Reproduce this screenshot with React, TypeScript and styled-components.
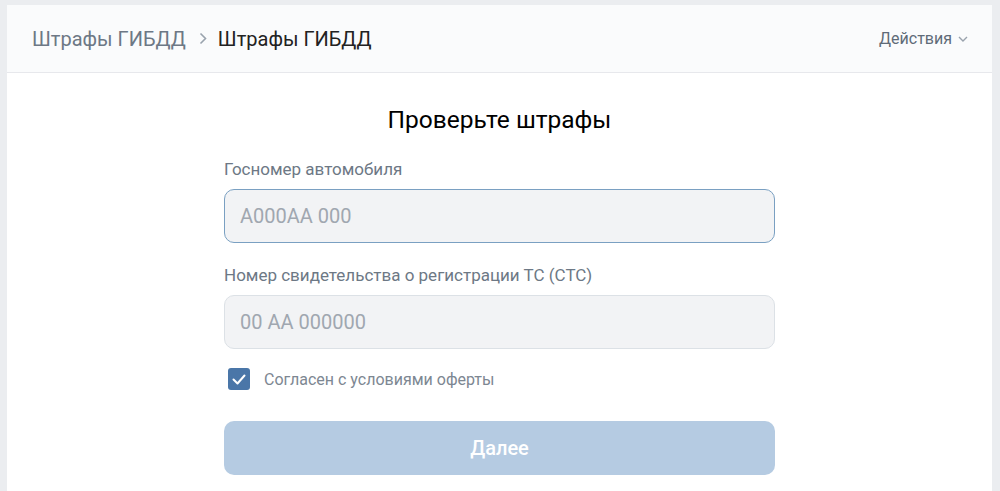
import styled, { createGlobalStyle } from "styled-components";

const GlobalStyle = createGlobalStyle`
  html, body {
    margin: 0;
    padding: 0;
    background: #ebedf0;
    font-family: Roboto, "Liberation Sans", Arial, sans-serif;
  }
`;

const Page = styled.div`
  padding: 5px 8px 0 7px;
  height: 491px;
  box-sizing: border-box;
  overflow: hidden;
`;

const Card = styled.div`
  background: #ffffff;
  height: 100%;
  display: flex;
  flex-direction: column;
`;

const Header = styled.div`
  height: 68px;
  box-sizing: border-box;
  background: #fafbfc;
  border-bottom: 1px solid #e7e8ec;
  display: flex;
  align-items: center;
  justify-content: space-between;
  padding: 0 24px 0 25px;
`;

const Crumbs = styled.div`
  display: flex;
  align-items: center;
  font-size: 20px;
`;

const Crumb = styled.span<{ $active?: boolean }>`
  color: ${(p) => (p.$active ? "#222222" : "#6d7885")};
`;

const Sep = styled.span`
  display: inline-flex;
  margin: 0 11px 0 13px;
  color: #99a2ad;
`;

const Actions = styled.button`
  border: none;
  background: none;
  padding: 0;
  font: inherit;
  font-size: 16px;
  color: #5f6b78;
  display: flex;
  align-items: center;
  gap: 6px;
`;

const Body = styled.div`
  display: flex;
  flex-direction: column;
  align-items: center;
  padding-top: 32px;
`;

const Form = styled.form`
  width: 551px;
  display: flex;
  flex-direction: column;
`;

const Title = styled.h2`
  margin: 0 0 24px;
  text-align: center;
  font-size: 24.5px;
  line-height: 30px;
  font-weight: 400;
  color: #000000;
`;

const Label = styled.label`
  font-size: 17px;
  color: #6d7885;
  margin-bottom: 10px;
  line-height: 20px;
`;

const Input = styled.input<{ $focused?: boolean }>`
  height: 54px;
  box-sizing: border-box;
  border-radius: 10px;
  border: 1px solid ${(p) => (p.$focused ? "#7aa0c2" : "#dce1e6")};
  background: #f2f3f5;
  padding: 0 15px;
  font: inherit;
  font-size: 20px;
  color: #222;
  margin-bottom: 22px;
  outline: none;
  &::placeholder {
    color: #a0a7b0;
  }
`;

const CheckRow = styled.label`
  display: flex;
  align-items: center;
  gap: 14px;
  padding-left: 4px;
  margin: -3px 0 31px;
  font-size: 16px;
  color: #7d8792;
`;

const Box = styled.span`
  width: 22px;
  height: 22px;
  border-radius: 3px;
  background: #4a76a8;
  display: inline-flex;
  align-items: center;
  justify-content: center;
`;

const Submit = styled.button`
  height: 54px;
  border: none;
  border-radius: 10px;
  background: #b5cbe2;
  color: #ffffff;
  font: inherit;
  font-size: 20px;
  font-weight: 500;
`;

export default function App() {
  return (
    <>
      <GlobalStyle />
      <Page>
        <Card>
          <Header>
            <Crumbs>
              <Crumb>Штрафы ГИБДД</Crumb>
              <Sep>
                <svg width="8" height="13" viewBox="0 0 8 13" fill="none">
                  <path d="M1.5 1.5l5 5-5 5" stroke="currentColor" strokeWidth="1.6" />
                </svg>
              </Sep>
              <Crumb $active>Штрафы ГИБДД</Crumb>
            </Crumbs>
            <Actions type="button">
              Действия
              <svg width="10" height="6" viewBox="0 0 10 6" fill="none">
                <path d="M1 1l4 4 4-4" stroke="#99a2ad" strokeWidth="1.4" />
              </svg>
            </Actions>
          </Header>
          <Body>
            <Form onSubmit={(e) => e.preventDefault()}>
              <Title>Проверьте штрафы</Title>
              <Label>Госномер автомобиля</Label>
              <Input $focused placeholder="А000АА 000" />
              <Label>Номер свидетельства о регистрации ТС (СТС)</Label>
              <Input placeholder="00 АА 000000" />
              <CheckRow>
                <Box>
                  <svg width="14" height="11" viewBox="0 0 14 11" fill="none">
                    <path d="M1.5 5.5l4 4 7-8" stroke="#fff" strokeWidth="2" strokeLinecap="round" strokeLinejoin="round" />
                  </svg>
                </Box>
                Согласен с условиями оферты
              </CheckRow>
              <Submit type="submit">Далее</Submit>
            </Form>
          </Body>
        </Card>
      </Page>
    </>
  );
}
